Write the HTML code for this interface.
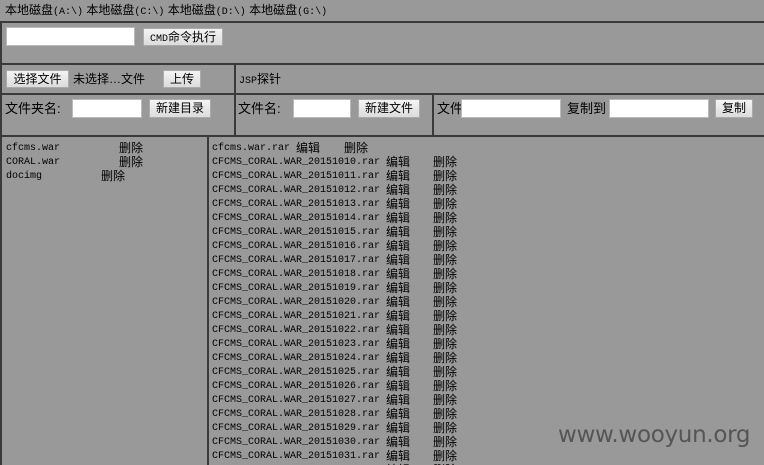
<!DOCTYPE html>
<html><head><meta charset="utf-8"><style>
*{margin:0;padding:0;box-sizing:border-box}
html,body{width:764px;height:465px;overflow:hidden}
body{background:#999;position:relative;font-family:"Liberation Sans","Noto Sans CJK SC",sans-serif;font-size:12px;color:#000}
.a{position:absolute;white-space:nowrap}
.h{position:absolute;height:2px;background:#3a3a3a}
.v{position:absolute;width:2px;background:#3a3a3a}
.in{position:absolute;background:#fff;border:1px solid #bbb}
.bt{position:absolute;background:linear-gradient(#f4f4f4,#dcdcdc);border:1px solid #aaa;text-align:center;font-size:12px;line-height:16px}
.m{font-family:"Liberation Mono","Noto Sans CJK SC",monospace;font-size:10px}
.r{position:absolute;height:14px;line-height:14px;white-space:nowrap;font-size:12px}
.r span{position:absolute;top:0;line-height:14px;height:14px}
.r span.m{top:1px}
</style></head><body>
<div class="a" style="left:5px;top:3px;line-height:14px;font-size:12px">本地磁盘<span class="m">(A:\)</span> 本地磁盘<span class="m">(C:\)</span> 本地磁盘<span class="m">(D:\)</span> 本地磁盘<span class="m">(G:\)</span></div>
<div class="h" style="left:0;top:21px;width:764px"></div>
<div class="v" style="left:0;top:21px;height:444px"></div>
<div class="in" style="left:6px;top:27px;width:129px;height:19px"></div>
<div class="bt" style="left:143px;top:28px;width:80px;height:18px"><span class="m" style="font-size:10px">CMD</span>命令执行</div>
<div class="h" style="left:0;top:63px;width:764px"></div>
<div class="bt" style="left:6px;top:70px;width:63px;height:18px">选择文件</div>
<div class="a" style="left:73px;top:71px;line-height:16px">未选择…文件</div>
<div class="bt" style="left:163px;top:70px;width:38px;height:18px">上传</div>
<div class="v" style="left:234px;top:63px;height:73px"></div>
<div class="a" style="left:239px;top:71px;line-height:16px"><span class="m">JSP</span>探针</div>
<div class="h" style="left:0;top:93px;width:764px"></div>
<div class="a" style="left:5px;top:101px;line-height:16px;font-size:13px">文件夹名:</div>
<div class="in" style="left:72px;top:99px;width:70px;height:19px"></div>
<div class="bt" style="left:149px;top:99px;width:62px;height:19px">新建目录</div>
<div class="a" style="left:238px;top:101px;line-height:16px;font-size:13px">文件名:</div>
<div class="in" style="left:293px;top:99px;width:58px;height:19px"></div>
<div class="bt" style="left:358px;top:99px;width:62px;height:19px">新建文件</div>
<div class="v" style="left:432px;top:93px;height:43px"></div>
<div class="a" style="left:437px;top:101px;line-height:16px;font-size:13px">文件</div>
<div class="in" style="left:461px;top:99px;width:100px;height:19px"></div>
<div class="a" style="left:567px;top:101px;line-height:16px;font-size:13px">复制到</div>
<div class="in" style="left:609px;top:99px;width:100px;height:19px"></div>
<div class="bt" style="left:715px;top:99px;width:38px;height:19px">复制</div>
<div class="h" style="left:0;top:135px;width:764px"></div>
<div class="v" style="left:207px;top:135px;height:330px"></div>
<div class="r" style="left:6px;top:141px;width:200px"><span class="m">cfcms.war</span><span style="left:113px">删除</span></div>
<div class="r" style="left:6px;top:155px;width:200px"><span class="m">CORAL.war</span><span style="left:113px">删除</span></div>
<div class="r" style="left:6px;top:169px;width:200px"><span class="m">docimg</span><span style="left:95px">删除</span></div>
<div class="r" style="left:212px;top:141px;width:300px"><span class="m">cfcms.war.rar</span><span style="left:84px">编辑</span><span style="left:132px">删除</span></div>
<div id="L"></div>
<script>
var s='';for(var i=0;i<23;i++){var d=i<22?(20151010+i):20151101;s+='<div class="r" style="left:212px;top:'+(155+i*14)+'px;width:300px"><span class="m">CFCMS_CORAL.WAR_'+d+'.rar</span><span style="left:174px">编辑</span><span style="left:221px">删除</span></div>';}
document.getElementById('L').innerHTML=s;
</script>
<div class="a" style="left:558px;top:422px;font-size:23px;color:#555;font-family:'DejaVu Sans','Liberation Sans',sans-serif;letter-spacing:-0.3px">www.wooyun.org</div>
</body></html>
